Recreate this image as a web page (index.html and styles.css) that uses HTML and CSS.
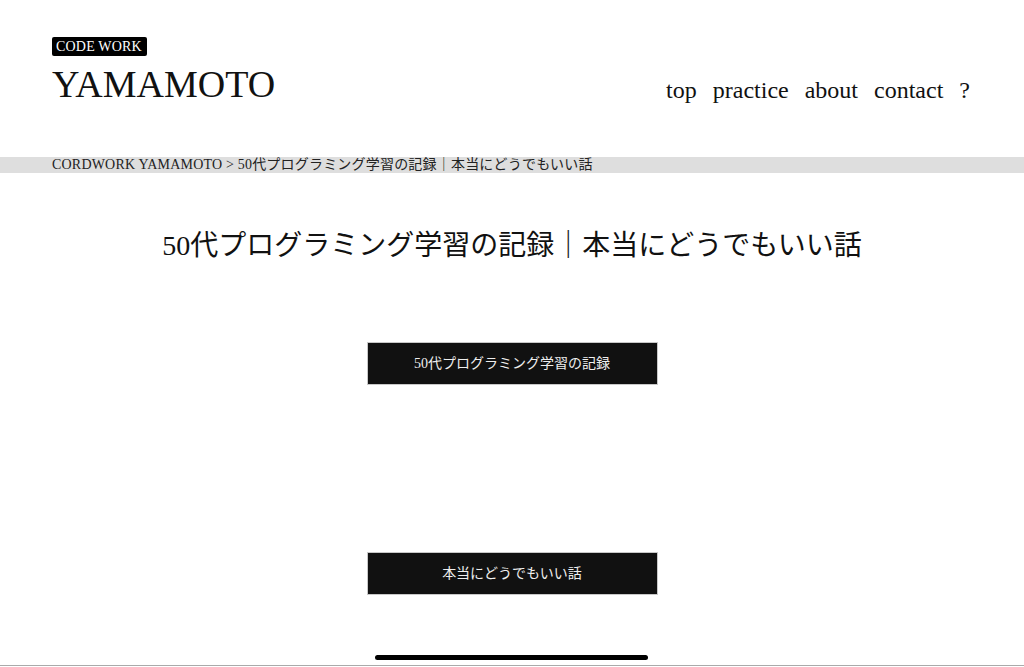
FILE: index.html
```html
<!DOCTYPE html>
<html lang="ja">
  <head>
    <meta charset="UTF-8" />
    <meta name="viewport" content="width=device-width, initial-scale=1.0" />
    <title>50代プログラミング学習の記録｜本当にどうでもいい話</title>
    <link rel="stylesheet" href="styles.css">
  </head>
  <body>
    <div class="header">
      <div class="logo">
        <div class="badge">CODE WORK</div>
        <div class="site-name">YAMAMOTO</div>
      </div>
      <div class="nav">
        <a href="#">top</a>
        <a href="#">practice</a>
        <a href="#">about</a>
        <a href="#">contact</a>
        <a href="#">?</a>
      </div>
    </div>

    <div class="breadcrumb">CORDWORK YAMAMOTO &gt; 50代プログラミング学習の記録｜本当にどうでもいい話</div>

    <h1 class="page-title">50代プログラミング学習の記録｜本当にどうでもいい話</h1>

    <div class="links">
      <a class="link-button" href="#">50代プログラミング学習の記録</a>
      <a class="link-button" href="#">本当にどうでもいい話</a>
    </div>

    <div class="bottom-line"></div>
    <div class="home-bar"></div>
  </body>
</html>
```

FILE: styles.css
```css
body {
  margin: 0;
  padding: 0;
  background-color: #fff;
  color: #111;
  font-family: "Liberation Serif", "Noto Sans CJK JP", serif;
}
a {
  color: inherit;
  text-decoration: none;
}
.header {
  display: flex;
  justify-content: space-between;
  align-items: flex-end;
  padding: 37px 54px 0 52px;
}
.badge {
  display: inline-block;
  background-color: #000;
  color: #fff;
  font-size: 14px;
  line-height: 19px;
  padding: 0 5px 0 4px;
  border-radius: 2px;
  letter-spacing: 0.2px;
}
.site-name {
  margin-top: 9px;
  font-size: 38px;
  line-height: 38px;
}
.nav {
  display: flex;
  gap: 16px;
  font-size: 24px;
  line-height: 24px;
  margin-bottom: 1px;
}
.breadcrumb {
  margin-top: 54px;
  background-color: #dedede;
  padding-left: 52px;
  font-size: 14px;
  line-height: 16px;
  color: #222;
  letter-spacing: 0.2px;
}
.page-title {
  margin: 53px 0 0;
  text-align: center;
  font-size: 28px;
  font-weight: normal;
  line-height: 40px;
}
.links {
  display: flex;
  flex-direction: column;
  align-items: center;
  gap: 167px;
  margin-top: 76px;
}
.link-button {
  display: block;
  box-sizing: border-box;
  width: 291px;
  height: 43px;
  line-height: 41px;
  text-align: center;
  background-color: #111;
  border: 1px solid #c8c8c8;
  color: #eee;
  font-size: 14px;
}
.bottom-line {
  position: fixed;
  left: 0;
  right: 0;
  bottom: 1px;
  height: 1px;
  background-color: #aaa;
}
.home-bar {
  position: fixed;
  left: 375px;
  width: 273px;
  top: 655px;
  height: 5px;
  border-radius: 3px;
  background-color: #000;
}
```
